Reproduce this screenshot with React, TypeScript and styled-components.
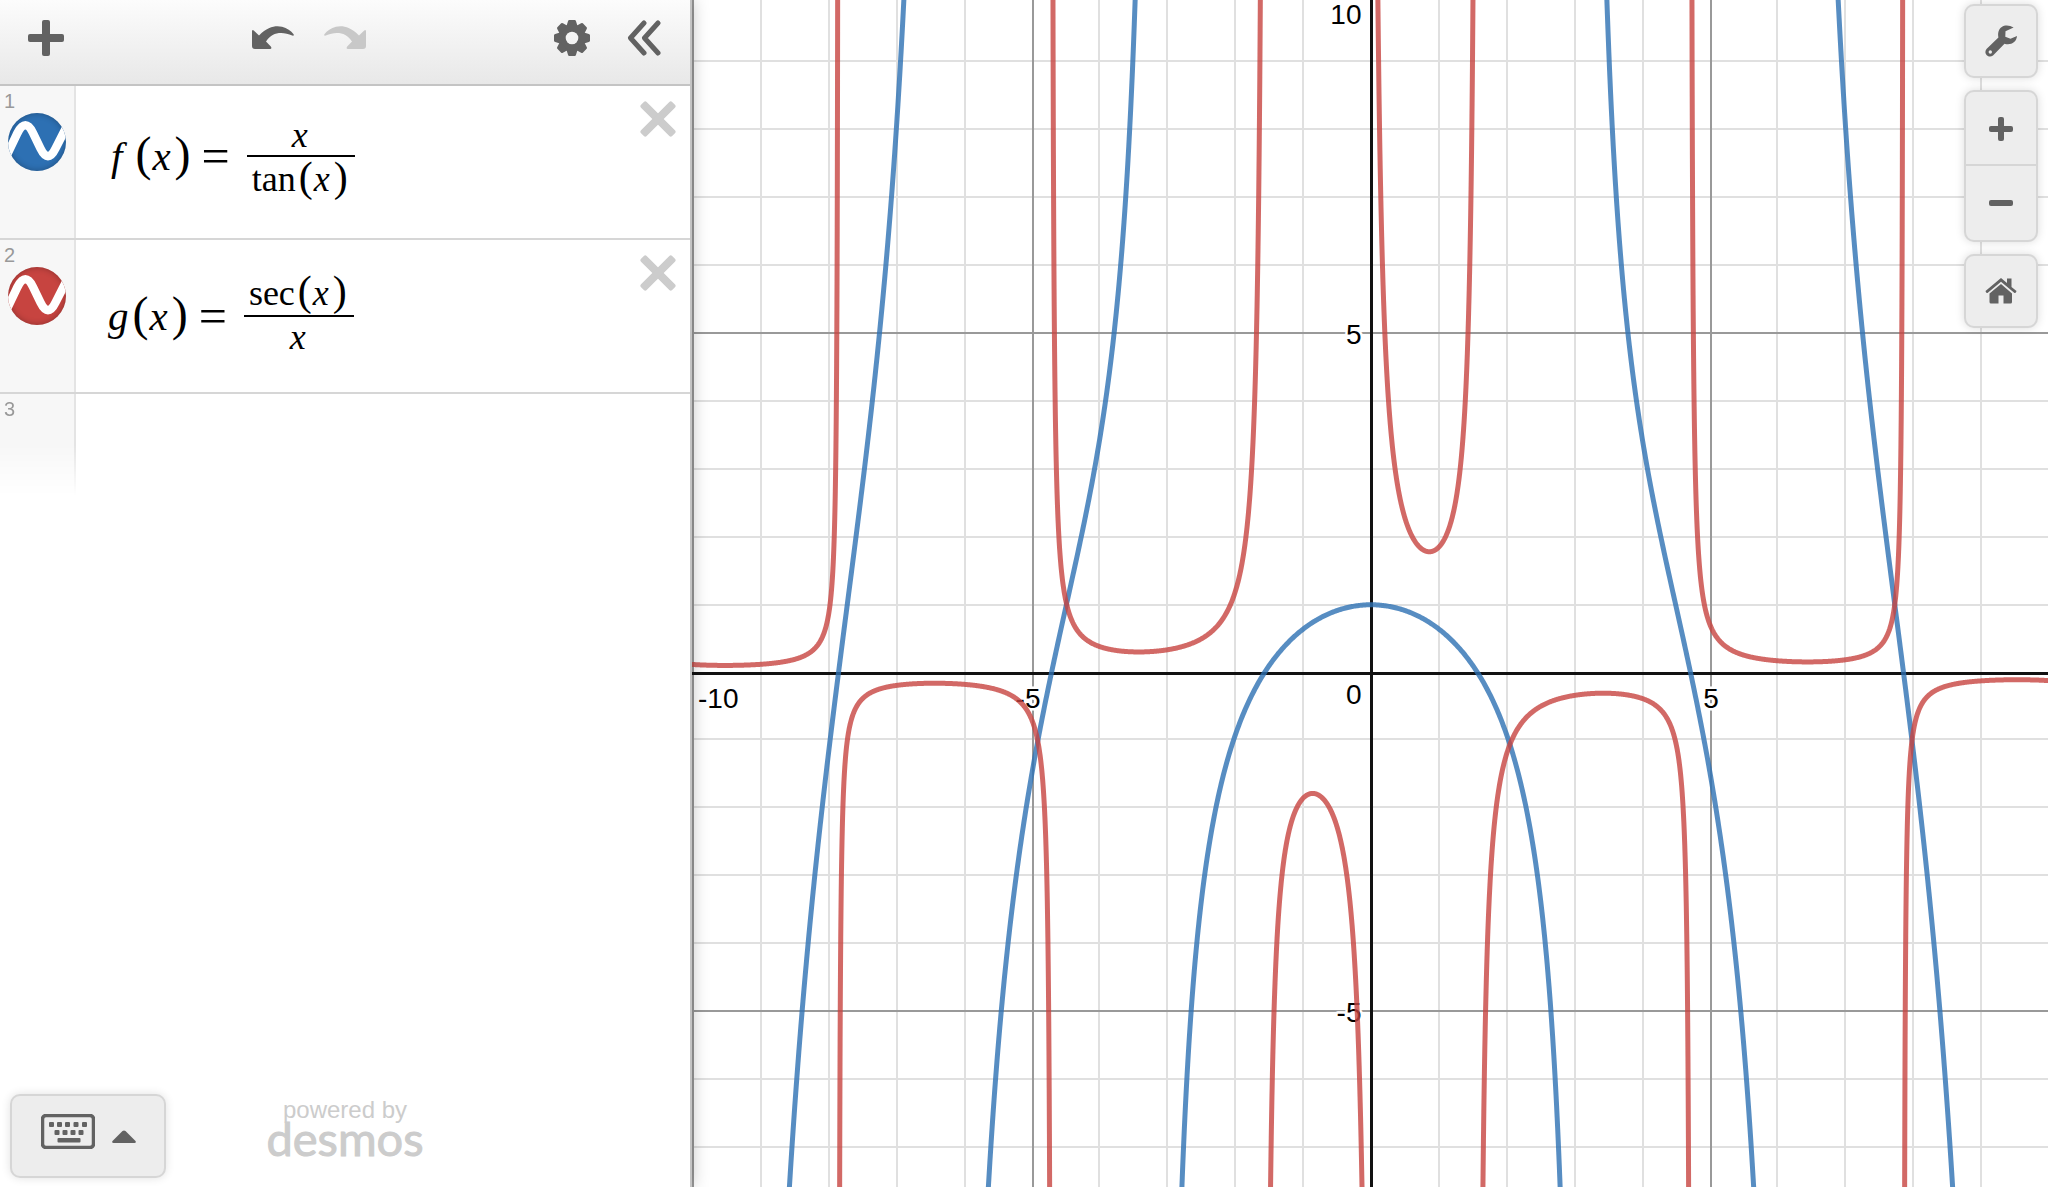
import React, { useLayoutEffect, useRef, useState } from "react";
import styled, { createGlobalStyle } from "styled-components";

const GlobalStyle = createGlobalStyle`
  *, *::before, *::after { box-sizing: border-box; }
  body { margin: 0; background: #fff; font-family: "Liberation Sans", Arial, sans-serif; }
`;

const ink = "#626262";

const Calculator = styled.main`
  display: flex;
  height: 100vh;
  overflow: hidden;
`;

const Panel = styled.section`
  display: flex;
  flex-direction: column;
  flex: 0 0 692px;
  border-right: 2px solid #c4c4c4;
  background: #fff;
  box-shadow: 0 0 16px rgba(0, 0, 0, 0.25);
  z-index: 1;
`;

const Toolbar = styled.header`
  display: flex;
  align-items: center;
  justify-content: space-between;
  height: 86px;
  padding: 0 20px 8px;
  border-bottom: 2px solid #c4c4c4;
  background: linear-gradient(#fcfcfc, #e8e8e8);
`;

const ToolGroup = styled.div`
  display: flex;
  gap: 20px;
`;

const IconButton = styled.button`
  display: flex;
  align-items: center;
  justify-content: center;
  width: 52px;
  height: 52px;
  padding: 0;
  border: 0;
  background: none;
  color: ${ink};

  &:disabled { color: #c8c8c8; }
`;

const ExpressionList = styled.ol`
  flex: 1;
  margin: 0;
  padding: 0;
  list-style: none;
`;

const Row = styled.li<{ $last?: boolean }>`
  display: flex;
  height: ${(p) => (p.$last ? 102 : 154)}px;
  border-bottom: ${(p) => (p.$last ? 0 : 2)}px solid #d6d6d6;
`;

const Gutter = styled.div<{ $fade?: boolean }>`
  display: flex;
  flex-direction: column;
  align-items: center;
  gap: 1px;
  flex: 0 0 76px;
  padding-top: 4px;
  border-right: 2px solid #e4e4e4;
  background: #f7f7f7;
  ${(p) => p.$fade && "mask-image: linear-gradient(#000 50%, transparent);"}
`;

const RowNumber = styled.span`
  align-self: flex-start;
  padding-left: 4px;
  font-size: 20px;
  line-height: 22px;
  color: #999;
`;

const ColorButton = styled.button<{ $color: string }>`
  width: 58px;
  height: 58px;
  padding: 0;
  overflow: hidden;
  border: 0;
  border-radius: 50%;
  background: ${(p) => p.$color};
  box-shadow: inset 0 0 6px rgba(0, 0, 0, 0.3);
  color: #fff;

  svg { display: block; }
`;

const Formula = styled.div<{ $top: number }>`
  display: flex;
  align-items: center;
  flex: 1;
  height: 94px;
  margin-top: ${(p) => p.$top}px;
  padding-left: 32px;
  font-family: "Liberation Serif", "Times New Roman", serif;
  font-size: 41px;
  line-height: 44px;
  white-space: nowrap;
  color: #000;
`;

const FunctionName = styled.i<{ $before?: number; $after: number }>`
  padding: 0 ${(p) => p.$after}px 0 ${(p) => p.$before ?? 0}px;
`;

const Operator = styled.span`
  padding-right: 3px;
`;

const Variable = styled.i`
  padding: 0 4px 0 1px;
`;

const Paren = styled.span<{ $small?: boolean }>`
  font-size: ${(p) => (p.$small ? 42 : 48)}px;
  line-height: 0;
`;

const Equals = styled.span`
  padding: 0 17px 0 11px;
  font-size: 50px;
  line-height: 0;
`;

const Fraction = styled.span`
  display: grid;
  grid-template-rows: 46px 46px;
  row-gap: 2px;
  font-size: 36px;
  text-align: center;
  background: linear-gradient(#000, #000) center / 100% 2px no-repeat;
`;

const Numerator = styled.span<{ $plain?: boolean }>`
  align-self: end;
  padding: 0 7px 0 5px;
  line-height: ${(p) => (p.$plain ? 40 : 44)}px;
`;

const Denominator = styled(Numerator)`
  align-self: start;
`;

const DeleteButton = styled(IconButton)`
  margin: 7px 6px 0 0;
  color: #ccc;
`;

const EmptyExpression = styled.input`
  flex: 1;
  padding: 0 32px;
  border: 0;
  outline: 0;
  background: none;
  font: 41px "Liberation Serif", serif;
`;

const Footer = styled.footer`
  display: grid;
  grid-template-columns: 1fr auto 1fr;
  align-items: end;
  padding: 0 10px 9px;
`;

const KeypadButton = styled.button`
  display: flex;
  justify-content: center;
  gap: 17px;
  width: 156px;
  height: 84px;
  padding: 18px 0 0;
  border: 2px solid #d6d6d6;
  border-radius: 10px;
  background: #ededed;
  box-shadow: 0 0 10px rgba(0, 0, 0, 0.12);
  color: ${ink};
`;

const Brand = styled.a`
  display: flex;
  flex-direction: column;
  align-items: center;
  padding-bottom: 26px;
  color: #ccc;
  text-decoration: none;
  font-size: 24px;
  line-height: 28px;
`;

const Wordmark = styled.span`
  font-family: Lato, sans-serif;
  font-size: 47px;
  -webkit-text-stroke: 1px #ccc;
`;

const GraphPaper = styled.section`
  display: flex;
  justify-content: flex-end;
  align-items: flex-start;
  position: relative;
  flex: 1;
  min-width: 0;
  background: #fff;
`;

const Plot = styled.svg`
  position: absolute;
  inset: 0;
  width: 100%;
  height: 100%;
`;

const AxisLabel = styled.text`
  font: 28px "Liberation Sans", Arial, sans-serif;
  fill: #000;
  stroke: #fff;
  stroke-width: 5px;
  stroke-linejoin: round;
  paint-order: stroke;
`;

const Controls = styled.nav`
  display: flex;
  flex-direction: column;
  gap: 12px;
  padding: 4px 10px;
  z-index: 1;
`;

const ControlGroup = styled.div`
  border: 2px solid #d6d6d6;
  border-radius: 10px;
  background: #ededed;
  box-shadow: 0 0 10px rgba(0, 0, 0, 0.14);
`;

const ControlButton = styled(IconButton)`
  width: 70px;
  height: 70px;

  & + & {
    height: 76px;
    border-top: 2px solid #d6d6d6;
  }

  &:first-child:not(:last-child) {
    height: 72px;
    padding-top: 2px;
  }
`;

const PlusIcon = ({ size, bar }: { size: number; bar: number }) => (
  <svg width={size} height={size} viewBox={`0 0 ${size} ${size}`} fill="currentColor">
    <rect x={(size - bar) / 2} width={bar} height={size} rx="2" />
    <rect y={(size - bar) / 2} width={size} height={bar} rx="2" />
  </svg>
);

const MinusIcon = () => (
  <svg width="24" height="24" fill="currentColor"><rect y="9" width="24" height="6" rx="2" /></svg>
);

const CrossIcon = () => (
  <svg width="36" height="36" fill="currentColor">
    <g transform="rotate(45 18 18)">
      <rect x="-4" y="14" width="44" height="8" rx="2" />
      <rect x="14" y="-4" width="8" height="44" rx="2" />
    </g>
  </svg>
);

const UndoIcon = ({ flip }: { flip?: boolean }) => (
  <svg width="42" height="24" viewBox="0 0 42 24" fill="currentColor">
    <path
      transform={flip ? "translate(42 0) scale(-1 1)" : undefined}
      d="M0 5.500Q0 3 1.800 4.600L7 9.400C16 .500 24-.800 30 .800C35 2 39 5 41.600 8.200Q42.400 10.200 40.200 9.600C31 5.200 20 5.500 14 15.400L18.800 20.600Q20.300 23 18 23H3Q0 23 0 20Z"
    />
  </svg>
);

const GearIcon = () => (
  <svg width="36" height="36" viewBox="-18 -18 36 36" fill="currentColor">
    <mask id="gear-hole">
      <rect x="-18" y="-18" width="36" height="36" fill="#fff" />
      <circle r="6.300" fill="#000" />
    </mask>
    <g mask="url(#gear-hole)">
      <circle r="13.500" />
      {[0, 45, 90, 135, 180, 225, 270, 315].map((a) => (
        <path key={a} transform={`rotate(${a})`} d="M-5.500 -12L-4 -16.800Q-3.700 -18 -2.700 -18H2.700Q3.700 -18 4 -16.800L5.500 -12Z" />
      ))}
    </g>
  </svg>
);

const CollapseIcon = () => (
  <svg width="34" height="36" fill="none" stroke="currentColor" strokeWidth="5" strokeLinecap="round" strokeLinejoin="round">
    <path d="M17 3L3.500 18L17 33M31 3L17.500 18L31 33" />
  </svg>
);

const WaveIcon = () => (
  <svg width="58" height="58" fill="none" stroke="currentColor" strokeWidth="8.500">
    <path d="M-2 44L9.500 20Q17.500 4.500 25 20L32.500 35.500Q40 51 47.500 35.500L60 11" />
  </svg>
);

const WrenchIcon = () => (
  <svg width="32" height="32" viewBox="0 0 32 32" fill="currentColor">
    <path
      fillRule="evenodd"
      d="M28.600 2.600C23-1.200 15.500 0 13.600 6.200C12.900 8.500 13 10.500 13.400 12.400L1.500 24C-2 28.300 3.600 34 8 30.500L19.500 18.700C25.500 20.600 31.500 17.500 32 11L25.500 13.800L20.300 11.800L20.500 6.200ZM5.300 25.300A1.700 1.700 0 1 1 5.300 28.700A1.700 1.700 0 1 1 5.300 25.300Z"
    />
  </svg>
);

const HomeIcon = () => (
  <svg width="32" height="26" viewBox="0 0 32 26" fill="currentColor">
    <path d="M16 6L27 15.500V24Q27 25.500 25.500 25.500H18.500V17.500H13.500V25.500H6Q4.500 25.500 4.500 24V15.500Z" />
    <path d="M16 0L22 5V.500H26.500V9L31.500 13Q31 15.500 29.500 15L16 3.700L2.500 15Q1 15.500.500 13Z" />
  </svg>
);

const KeyboardIcon = () => (
  <svg width="54" height="35" viewBox="0 0 54 35" fill="currentColor">
    <rect x="1.500" y="1.500" width="51" height="32" rx="3.500" fill="none" stroke="currentColor" strokeWidth="3.500" />
    {[8, 16, 24, 32.500, 41].map((x) => <rect key={x} x={x} y="8" width="5" height="5" rx="1" />)}
    {[13.500, 21.500, 29.500, 37.500].map((x) => <rect key={x} x={x} y="16" width="5" height="5" rx="1" />)}
    <rect x="16.500" y="24" width="23" height="4.500" rx="1" />
  </svg>
);

const CaretIcon = () => (
  <svg width="24" height="30" fill="currentColor"><path d="M10.500 17Q12 15.800 13.500 17L23.500 27Q24.500 29 22.500 29H1.500Q-.500 29 .500 27Z" /></svg>
);

/* Left edge, top edge and number of units across the visible graph. */
const view = { left: -10.015, top: 9.92, across: 20 };

type Curve = { fn: (x: number) => number; breaks: number[]; color: string };

const turns = [-4, -3, -2, -1, 0, 1, 2, 3, 4];
const curves: Curve[] = [
  {
    fn: (x) => (Math.abs(x) < 1e-6 ? 1 : x / Math.tan(x)),
    breaks: turns.filter((n) => n !== 0).map((n) => n * Math.PI),
    color: "#2d70b3",
  },
  {
    fn: (x) => 1 / (Math.cos(x) * x),
    breaks: [...turns.map((n) => (n + 0.5) * Math.PI), 0].sort((a, b) => a - b),
    color: "#c74440",
  },
];

function tracePath({ fn, breaks }: Curve, toX: (x: number) => number, toY: (y: number) => number) {
  const samples = 600;
  let d = "";
  for (let i = 0; i + 1 < breaks.length; i++) {
    const [a, b] = [breaks[i], breaks[i + 1]];
    let pen = "M";
    for (let s = 1; s < samples; s++) {
      const x = a + ((b - a) * (1 - Math.cos((Math.PI * s) / samples))) / 2;
      const y = fn(x);
      if (Math.abs(y) > 60) continue;
      d += `${pen}${toX(x).toFixed(2)} ${toY(y).toFixed(2)}`;
      pen = "L";
    }
  }
  return d;
}

function Graph() {
  const ref = useRef<SVGSVGElement>(null);
  const [size, setSize] = useState({ w: 1356, h: 1187 });

  useLayoutEffect(() => {
    const el = ref.current!;
    const measure = () => setSize({ w: el.clientWidth, h: el.clientHeight });
    measure();
    const observer = new ResizeObserver(measure);
    observer.observe(el);
    return () => observer.disconnect();
  }, []);

  const unit = size.w / view.across;
  const toX = (x: number) => (x - view.left) * unit;
  const toY = (y: number) => (view.top - y) * unit;
  const snap = (v: number) => Math.floor(v / 2) * 2 + 1;
  const xs: number[] = [];
  const ys: number[] = [];
  for (let x = Math.ceil(view.left); toX(x) < size.w; x++) xs.push(x);
  for (let y = Math.floor(view.top); toY(y) < size.h; y--) ys.push(y);
  const lineColor = (n: number) => (n % 5 === 0 ? "#999" : "#e0e0e0");
  const byWeight = (a: number, b: number) => Number(a % 5 === 0) - Number(b % 5 === 0);
  const lines = [
    ...xs.map((n) => ({ n, vertical: true })),
    ...ys.map((n) => ({ n, vertical: false })),
  ].sort((a, b) => byWeight(a.n, b.n));
  const originX = Math.floor(toX(0)) + 0.5;
  const originY = Math.floor(toY(0)) + 1.5;

  return (
    <Plot ref={ref} role="img" aria-label="Graph of f and g">
      <g strokeWidth="2">
        {lines.map(({ n, vertical }) => {
          const at = snap(vertical ? toX(n) : toY(n) - 0.5);
          return vertical ? (
            <line key={`x${n}`} x1={at} x2={at} y1="0" y2={size.h} stroke={lineColor(n)} />
          ) : (
            <line key={`y${n}`} x1="0" x2={size.w} y1={at} y2={at} stroke={lineColor(n)} />
          );
        })}
      </g>
      <g stroke="#111" strokeWidth="3">
        <line x1={originX} x2={originX} y1="0" y2={size.h} />
        <line x1="0" x2={size.w} y1={originY} y2={originY} />
      </g>
      <AxisLabel x="6" y={originY + 34}>-10</AxisLabel>
      <AxisLabel x={toX(-5) - 4} y={originY + 34} textAnchor="middle">-5</AxisLabel>
      <AxisLabel x={toX(5) + 1} y={originY + 34} textAnchor="middle">5</AxisLabel>
      <AxisLabel x={originX - 10} y={originY + 30} textAnchor="end">0</AxisLabel>
      <AxisLabel x={originX - 10} y="24" textAnchor="end">10</AxisLabel>
      <AxisLabel x={originX - 10} y={toY(5) + 10} textAnchor="end">5</AxisLabel>
      <AxisLabel x={originX - 10} y={toY(-5) + 10} textAnchor="end">-5</AxisLabel>
      {curves.map((c) => (
        <path key={c.color} d={tracePath(c, toX, toY)} fill="none" stroke={c.color} strokeOpacity="0.8" strokeWidth="5" strokeLinejoin="round" />
      ))}
    </Plot>
  );
}

const Call = ({ name, small }: { name: React.ReactNode; small?: boolean }) => (
  <span>
    {name}
    <Paren $small={small}>(</Paren>
    <Variable>x</Variable>
    <Paren $small={small}>)</Paren>
  </span>
);

export default function App() {
  return (
    <>
      <GlobalStyle />
      <Calculator>
        <Panel>
          <Toolbar>
            <IconButton aria-label="Add item"><PlusIcon size={36} bar={8} /></IconButton>
            <ToolGroup>
              <IconButton aria-label="Undo"><UndoIcon /></IconButton>
              <IconButton aria-label="Redo" disabled><UndoIcon flip /></IconButton>
            </ToolGroup>
            <ToolGroup>
              <IconButton aria-label="Edit list"><GearIcon /></IconButton>
              <IconButton aria-label="Hide list"><CollapseIcon /></IconButton>
            </ToolGroup>
          </Toolbar>
          <ExpressionList>
            <Row>
              <Gutter>
                <RowNumber>1</RowNumber>
                <ColorButton $color="#2d70b3" aria-label="Hide f"><WaveIcon /></ColorButton>
              </Gutter>
              <Formula $top={23}>
                <Call name={<FunctionName $before={3} $after={13}>f</FunctionName>} />
                <Equals>=</Equals>
                <Fraction>
                  <Numerator $plain><i>x</i></Numerator>
                  <Denominator><Call name={<Operator>tan</Operator>} small /></Denominator>
                </Fraction>
              </Formula>
              <DeleteButton aria-label="Delete f"><CrossIcon /></DeleteButton>
            </Row>
            <Row>
              <Gutter>
                <RowNumber>2</RowNumber>
                <ColorButton $color="#c74440" aria-label="Hide g"><WaveIcon /></ColorButton>
              </Gutter>
              <Formula $top={29}>
                <Call name={<FunctionName $after={4}>g</FunctionName>} />
                <Equals>=</Equals>
                <Fraction>
                  <Numerator><Call name={<Operator>sec</Operator>} small /></Numerator>
                  <Denominator $plain><i>x</i></Denominator>
                </Fraction>
              </Formula>
              <DeleteButton aria-label="Delete g"><CrossIcon /></DeleteButton>
            </Row>
            <Row $last>
              <Gutter $fade><RowNumber>3</RowNumber></Gutter>
              <EmptyExpression aria-label="Expression 3" />
            </Row>
          </ExpressionList>
          <Footer>
            <KeypadButton aria-label="Show keypad"><KeyboardIcon /><CaretIcon /></KeypadButton>
            <Brand href="#">powered by<Wordmark>desmos</Wordmark></Brand>
          </Footer>
        </Panel>
        <GraphPaper>
          <Graph />
          <Controls>
            <ControlGroup><ControlButton aria-label="Graph settings"><WrenchIcon /></ControlButton></ControlGroup>
            <ControlGroup>
              <ControlButton aria-label="Zoom in"><PlusIcon size={24} bar={6} /></ControlButton>
              <ControlButton aria-label="Zoom out"><MinusIcon /></ControlButton>
            </ControlGroup>
            <ControlGroup><ControlButton aria-label="Default viewport"><HomeIcon /></ControlButton></ControlGroup>
          </Controls>
        </GraphPaper>
      </Calculator>
    </>
  );
}
